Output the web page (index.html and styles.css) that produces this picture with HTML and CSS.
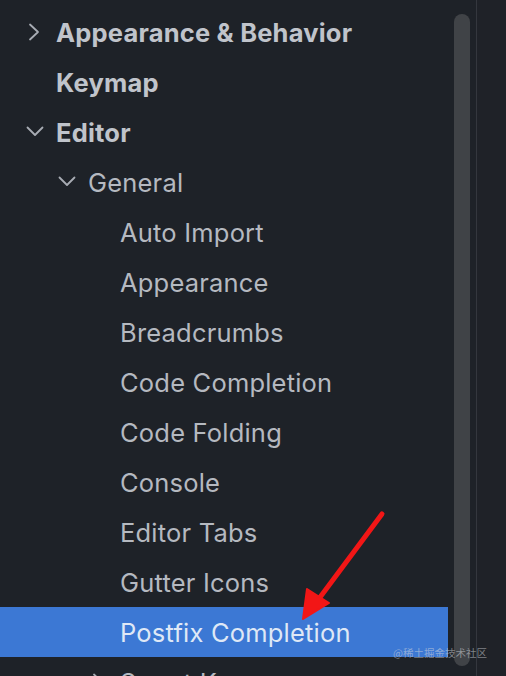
FILE: index.html
```html
<!DOCTYPE html>
<html>
<head>
<meta charset="utf-8">
<link rel="stylesheet" href="styles.css">
</head>
<body>
<div class="screen">
  <div class="tree">
    <div class="row lvl0 bold"><span class="ico"><svg viewBox="0 0 20 20" width="20" height="20"><polyline points="5,2.5 13,10 5,17.5" /></svg></span><span class="label">Appearance &amp; Behavior</span></div>
    <div class="row lvl0 bold"><span class="ico"></span><span class="label">Keymap</span></div>
    <div class="row lvl0 bold"><span class="ico"><svg viewBox="0 0 20 20" width="20" height="20"><polyline points="2.5,5.5 10,13 17.5,5.5" /></svg></span><span class="label">Editor</span></div>
    <div class="row lvl1"><span class="ico"><svg viewBox="0 0 20 20" width="20" height="20"><polyline points="2.5,5.5 10,13 17.5,5.5" /></svg></span><span class="label">General</span></div>
    <div class="row lvl2"><span class="ico"></span><span class="label">Auto Import</span></div>
    <div class="row lvl2"><span class="ico"></span><span class="label">Appearance</span></div>
    <div class="row lvl2"><span class="ico"></span><span class="label">Breadcrumbs</span></div>
    <div class="row lvl2"><span class="ico"></span><span class="label">Code Completion</span></div>
    <div class="row lvl2"><span class="ico"></span><span class="label">Code Folding</span></div>
    <div class="row lvl2"><span class="ico"></span><span class="label">Console</span></div>
    <div class="row lvl2"><span class="ico"></span><span class="label">Editor Tabs</span></div>
    <div class="row lvl2"><span class="ico"></span><span class="label">Gutter Icons</span></div>
    <div class="row lvl2 selected"><span class="ico"></span><span class="label">Postfix Completion</span></div>
    <div class="row lvl2"><span class="ico"><svg viewBox="0 0 20 20" width="20" height="20"><polyline points="5,2.5 13,10 5,17.5" /></svg></span><span class="label">Smart Keys</span></div>
  </div>
  <div class="track"><div class="thumb"></div></div>
  <div class="divider"></div>
  <div class="side"></div>
  <svg class="arrow" viewBox="0 0 506 676" width="506" height="676">
    <line x1="382" y1="514" x2="318" y2="600" />
    <polygon points="303,619 307,589 329,603" />
  </svg>
  <div class="watermark">@稀土掘金技术社区</div>
</div>
</body>
</html>
```
FILE: styles.css
```css
html, body {
  margin: 0;
  padding: 0;
  background: #1e2228;
  overflow: hidden;
}
.screen {
  position: relative;
  width: 506px;
  height: 676px;
  display: flex;
  overflow: hidden;
  font-family: Inter, "Noto Sans", sans-serif;
}
.tree {
  width: 448px;
  padding-top: 7px;
  flex: none;
}
.row {
  height: 50px;
  display: flex;
  align-items: center;
  padding-left: 25px;
  color: #b5b9c0;
  font-size: 25.5px;
  white-space: nowrap;
}
.row.bold { font-weight: 700; color: #c0c4cb; }
.row.lvl1 { padding-left: 57px; }
.row.lvl2 { padding-left: 89px; }
.ico {
  width: 20px;
  height: 20px;
  margin-right: 11px;
  flex: none;
  display: flex;
}
.ico svg polyline {
  fill: none;
  stroke: #a8acb4;
  stroke-width: 1.8;
  stroke-linecap: round;
  stroke-linejoin: round;
}
.label { letter-spacing: 0.2px; }
.row.selected {
  background: #3c78d4;
  color: #dfe8f6;
}
.track {
  width: 28px;
  flex: none;
  padding-top: 14px;
  padding-left: 6px;
  box-sizing: border-box;
}
.thumb {
  width: 16px;
  height: 652px;
  border-radius: 8px;
  background: #404347;
}
.divider {
  width: 1px;
  flex: none;
  background: #34373e;
}
.side {
  flex: 1;
  background: #1f2228;
}
.arrow {
  position: absolute;
  left: 0;
  top: 0;
  pointer-events: none;
}
.arrow line {
  stroke: #f21616;
  stroke-width: 5;
  stroke-linecap: round;
}
.arrow polygon {
  fill: #f21616;
  stroke: #f21616;
  stroke-width: 2;
  stroke-linejoin: round;
}
.watermark {
  position: absolute;
  left: 393px;
  top: 645px;
  font-family: "Noto Sans CJK SC", sans-serif;
  font-size: 10.5px;
  color: rgba(210, 214, 220, 0.55);
  white-space: nowrap;
}
```
